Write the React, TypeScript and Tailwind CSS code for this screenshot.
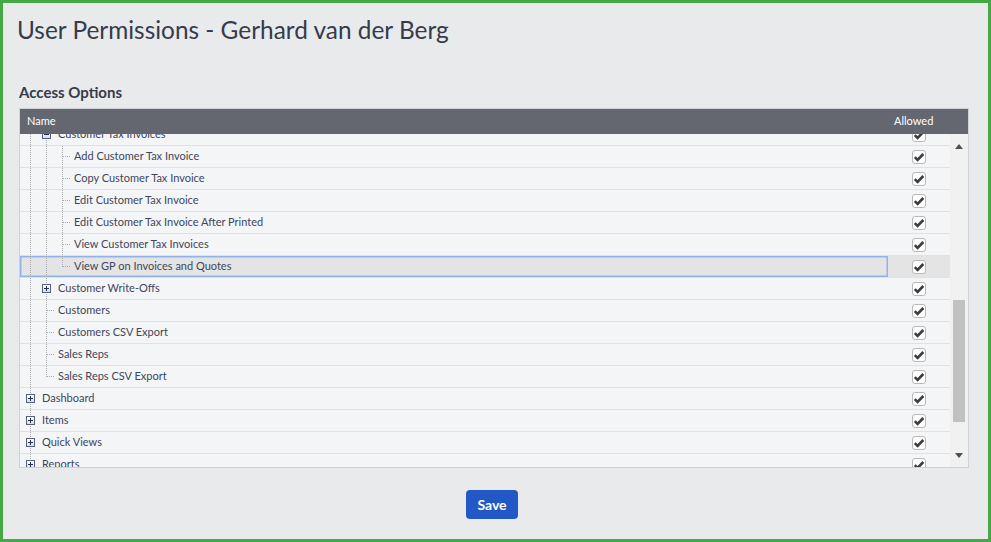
import React from "react"

type Node = {
  label: string
  level: number
  icon: "plus" | "minus" | "leaf"
  lines: boolean[]
  last?: boolean
  selected?: boolean
}

const rows: Node[] = [
  { label: "Customer Tax Invoices", level: 1, icon: "minus", lines: [true] },
  { label: "Add Customer Tax Invoice", level: 2, icon: "leaf", lines: [true, true] },
  { label: "Copy Customer Tax Invoice", level: 2, icon: "leaf", lines: [true, true] },
  { label: "Edit Customer Tax Invoice", level: 2, icon: "leaf", lines: [true, true] },
  { label: "Edit Customer Tax Invoice After Printed", level: 2, icon: "leaf", lines: [true, true] },
  { label: "View Customer Tax Invoices", level: 2, icon: "leaf", lines: [true, true] },
  { label: "View GP on Invoices and Quotes", level: 2, icon: "leaf", lines: [true, true], last: true, selected: true },
  { label: "Customer Write-Offs", level: 1, icon: "plus", lines: [true] },
  { label: "Customers", level: 1, icon: "leaf", lines: [true] },
  { label: "Customers CSV Export", level: 1, icon: "leaf", lines: [true] },
  { label: "Sales Reps", level: 1, icon: "leaf", lines: [true] },
  { label: "Sales Reps CSV Export", level: 1, icon: "leaf", lines: [true], last: true },
  { label: "Dashboard", level: 0, icon: "plus", lines: [] },
  { label: "Items", level: 0, icon: "plus", lines: [] },
  { label: "Quick Views", level: 0, icon: "plus", lines: [] },
  { label: "Reports", level: 0, icon: "plus", lines: [] },
]

const DOT = "#a9abb0"

const LineCell = ({ on }: { on: boolean }) => (
  <svg width="16" height="22" className="shrink-0">
    {on && <line x1="8.5" y1="0" x2="8.5" y2="22" stroke={DOT} strokeDasharray="1 1" />}
  </svg>
)

const NodeCell = ({ icon, last }: { icon: Node["icon"]; last?: boolean }) => (
  <svg width="16" height="22" className="shrink-0">
    <defs>
      <linearGradient id="box" x1="0" y1="0" x2="0" y2="1">
        <stop offset="0" stopColor="#ffffff" />
        <stop offset="1" stopColor="#d3d9e6" />
      </linearGradient>
    </defs>
    {icon === "leaf" ? (
      <>
        <line x1="8.5" y1="0" x2="8.5" y2={last ? 11 : 22} stroke={DOT} strokeDasharray="1 1" />
        <line x1="9" y1="10.5" x2="16" y2="10.5" stroke={DOT} strokeDasharray="1 1" />
      </>
    ) : (
      <>
        <line x1="8.5" y1="0" x2="8.5" y2="22" stroke={DOT} strokeDasharray="1 1" />
        <rect x="4.5" y="6.5" width="8" height="8" fill="url(#box)" stroke="#56607a" />
        <line x1="6" y1="10.5" x2="11" y2="10.5" stroke="#2b3144" />
        {icon === "plus" && <line x1="8.5" y1="8" x2="8.5" y2="13" stroke="#2b3144" />}
      </>
    )}
  </svg>
)

const CheckBox = () => (
  <div className="w-[14px] h-[14px] rounded-[3px] border border-[#b9b9b9] bg-white flex items-center justify-center">
    <svg width="12" height="12" viewBox="0 0 12 12">
      <path d="M1.8 6.2 L4.6 9 L10.3 3" fill="none" stroke="#3c3c3c" strokeWidth="2.6" />
    </svg>
  </div>
)

const Row = ({ node }: { node: Node }) => (
  <div
    className={`flex h-[22px] border-b border-[#dfe1e5] ${node.selected ? "bg-[#e4e4e5]" : "bg-[#f4f5f7]"}`}
  >
    <div
      className={`flex-1 flex items-center pl-[2px] ${node.selected ? "shadow-[inset_0_0_0_1.5px_#92b2ec]" : ""}`}
    >
      {node.lines.map((on, i) => (
        <LineCell key={i} on={on} />
      ))}
      <NodeCell icon={node.icon} last={node.last} />
      <span className="pl-[4px] text-[11px] text-[#40465c] whitespace-nowrap">{node.label}</span>
    </div>
    <div className="w-[62px] flex items-center justify-center">
      <CheckBox />
    </div>
  </div>
)

export default function App() {
  return (
    <div className="w-[991px] h-[542px] border-[3px] border-[#46a843] bg-[#e9eaeb] font-['Lato','Open_Sans',sans-serif] overflow-hidden">
      <h1 className="pl-[14px] pt-[12px] text-[24.4px] leading-[30px] text-[#363b4c]">
        User Permissions - Gerhard van der Berg
      </h1>
      <h2 className="pl-[16px] pt-[37px] text-[15px] leading-[20px] font-bold text-[#363b4c]">Access Options</h2>
      <div className="ml-[16px] mt-[6px] w-[950px] border border-[#cfd1d4] bg-[#f4f5f7]">
        <div className="flex h-[25px] bg-[#646770] text-[11px] text-white items-center">
          <div className="flex-1 pl-[7px]">Name</div>
          <div className="w-[80px] pl-[6px]">Allowed</div>
        </div>
        <div className="flex h-[333px]">
          <div className="flex-1 overflow-hidden">
            <div className="-mt-[10px]">
              {rows.map((r) => (
                <Row key={r.label} node={r} />
              ))}
            </div>
          </div>
          <div className="w-[18px] bg-[#f1f1f1] flex flex-col items-center">
            <div className="h-[18px] flex items-center justify-center pt-[6px]">
              <svg width="8" height="5">
                <path d="M0 5 L4 0 L8 5 Z" fill="#505050" />
              </svg>
            </div>
            <div className="mt-[148px] w-[12px] h-[122px] bg-[#c1c1c1]" />
            <div className="flex-1" />
            <div className="h-[18px] flex items-center justify-center pb-[6px]">
              <svg width="8" height="5">
                <path d="M0 0 L8 0 L4 5 Z" fill="#505050" />
              </svg>
            </div>
          </div>
        </div>
      </div>
      <div className="w-[950px] ml-[16px] flex justify-center pt-[22px] pr-[4px]">
        <button className="w-[52px] h-[29px] rounded-[4px] bg-[#2258c6] text-white text-[14px] font-bold">
          Save
        </button>
      </div>
    </div>
  )
}
